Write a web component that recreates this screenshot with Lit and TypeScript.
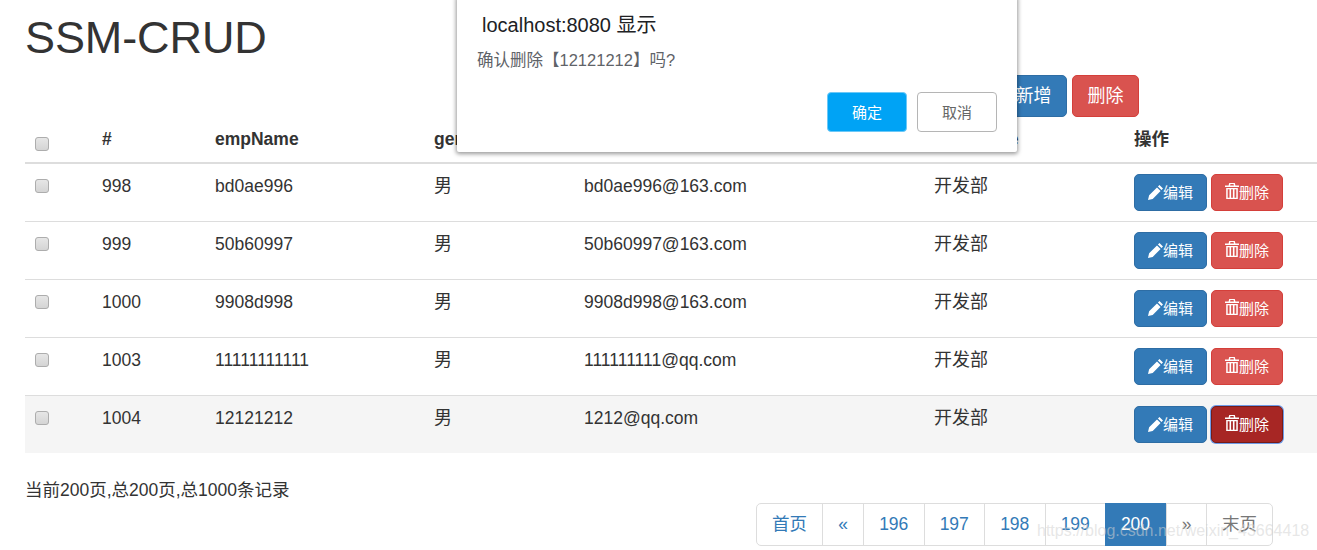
import { LitElement, html, css } from "lit";
import { customElement } from "lit/decorators.js";

const rows = [
  ["998", "bd0ae996", "bd0ae996@163.com"],
  ["999", "50b60997", "50b60997@163.com"],
  ["1000", "9908d998", "9908d998@163.com"],
  ["1003", "11111111111", "111111111@qq.com"],
  ["1004", "12121212", "1212@qq.com"],
];
const pages = ["首页", "«", "196", "197", "198", "199", "200", "»", "末页"];

const pencil = html`<svg class="ico" viewBox="0 0 16 16" aria-hidden="true"><path fill="currentColor" d="M0 16l1.2-5 8.4-8.4 3.8 3.8-8.4 8.4zM10.6 1.6L12.2 0 16 3.8l-1.6 1.6z"/></svg>`;
const trash = html`<svg class="ico trash" viewBox="0 0 14 16" preserveAspectRatio="none" aria-hidden="true"><path fill="currentColor" fill-rule="evenodd" d="M4.2 0h5.6l0.6 2.4H14v1.6H0V2.4h3.6zM5.4 1.1L5.1 2.4h3.8l-0.3-1.3zM1.2 5h11.6v11H1.2zM2.7 6.2v8.6h1.8V6.2zM6.1 6.2v8.6h1.8V6.2zM9.5 6.2v8.6h1.8V6.2z"/></svg>`;

@customElement("app-root")
export class AppRoot extends LitElement {
  static styles = css`
    :host {
      display: block;
      position: relative;
      height: 550px;
      overflow: hidden;
      background: #fff;
      color: #333;
      font-family: "Liberation Sans", "Noto Sans CJK SC", sans-serif;
      font-size: 17.5px;
      line-height: 25px;
    }
    .page { padding-left: 25px; }
    h1 {
      margin: 0;
      padding-top: 13px;
      font-size: 45px;
      font-weight: 400;
      line-height: 50px;
      letter-spacing: -0.1px;
    }
    .toolbar {
      display: flex;
      justify-content: flex-end;
      gap: 5px;
      margin-top: 12px;
      padding-right: 178px;
    }
    .btn {
      box-sizing: border-box;
      display: inline-flex;
      align-items: center;
      justify-content: center;
      border: 1px solid;
      border-radius: 5px;
      color: #fff;
      font: inherit;
      padding: 0;
    }
    .big { width: 67px; height: 42px; font-size: 18px; }
    .primary { background: #337ab7; border-color: #2e6da4; }
    .danger { background: #d9534f; border-color: #d43f3a; }
    table {
      width: 1292px;
      table-layout: fixed;
      border-collapse: collapse;
    }
    .c0 { width: 67px; }
    .c1 { width: 113px; }
    .c2 { width: 219px; }
    .c3 { width: 150px; }
    .c4 { width: 350px; }
    .c5 { width: 200px; }
    .c6 { width: 193px; }
    th, td {
      padding: 10px;
      text-align: left;
      vertical-align: top;
    }
    th {
      font-weight: 700;
      border-bottom: 2px solid #ddd;
      height: 25px;
    }
    td { border-bottom: 1px solid #ddd; height: 37px; }
    td.cjk { font-size: 18px; }
    tr:last-child td { border-bottom: 0; }
    tr.hover td { background: #f5f5f5; }
    .cb {
      appearance: none;
      display: block;
      box-sizing: border-box;
      width: 14px;
      height: 14px;
      margin: 0;
      border: 1px solid #adadad;
      border-radius: 3px;
      background: linear-gradient(#e6e6e6, #d4d4d4);
    }
    th .cb { margin-top: 10px; }
    td .cb { margin-top: 5px; }
    .ops { display: flex; gap: 4px; }
    .sm {
      width: 73px;
      height: 37px;
      font-size: 15px;
      line-height: 20px;
    }
    .sm.danger { width: 72px; }
    .sm.focus {
      background: #a72624;
      border-color: #761c19;
      box-shadow: 0 0 0 1px #6f9be8;
    }
    .ico { width: 15px; height: 15px; flex: none; margin-top: -1px; }
    .ico.trash { width: 14px; height: 16px; margin-top: -4px; }
    .status { margin-top: 25px; }
    .pager {
      display: flex;
      justify-content: flex-end;
      padding-right: 44px;
    }
    .pg {
      display: flex;
      box-sizing: border-box;
      height: 43px;
      border: 1px solid #ddd;
      border-radius: 5px;
    }
    .pg span {
      box-sizing: border-box;
      display: flex;
      align-items: center;
      justify-content: center;
      width: 60.5px;
      color: #337ab7;
      border-left: 1px solid #ddd;
    }
    .pg span:first-child { width: 65px; border-left: 0; }
    .pg span:nth-child(2) { width: 41px; }
    .pg span:nth-child(8) { width: 40px; color: #777; }
    .pg span:last-child { width: 66px; color: #777; }
    .pg span.on {
      width: 61px;
      background: #337ab7;
      color: #fff;
      border-left: 0;
      margin: -1px 0;
    }
    .dialog {
      position: absolute;
      left: 457px;
      top: -4px;
      box-sizing: border-box;
      width: 560px;
      height: 156px;
      background: #fff;
      border-radius: 2px;
      box-shadow: 0 1px 4px 1px rgba(0, 0, 0, 0.4);
    }
    .d-title {
      position: absolute;
      left: 25px;
      top: 17px;
      color: #202124;
      font-size: 20px;
    }
    .d-msg {
      position: absolute;
      left: 20px;
      top: 52px;
      color: #5f6368;
      font-size: 16.5px;
    }
    .d-actions {
      position: absolute;
      right: 20px;
      top: 96px;
      display: flex;
      gap: 10px;
    }
    .d-btn {
      box-sizing: border-box;
      width: 80px;
      height: 40px;
      border-radius: 4px;
      font: inherit;
      font-size: 15px;
      padding: 0;
    }
    .ok { background: #00a3f5; border: 1px solid #6cc8f7; color: #fff; }
    .cancel { background: #fff; border: 1px solid #b5b5b5; color: #666; }
    .mark {
      position: absolute;
      left: 1037px;
      top: 518px;
      color: rgba(210, 210, 210, 0.55);
      font-size: 16px;
      white-space: nowrap;
    }
  `;

  render() {
    return html`
      <div class="page">
        <h1>SSM-CRUD</h1>
        <div class="toolbar">
          <button class="btn big primary">新增</button>
          <button class="btn big danger">删除</button>
        </div>
        <table>
          <colgroup>
            ${[0, 1, 2, 3, 4, 5, 6].map((i) => html`<col class="c${i}" />`)}
          </colgroup>
          <thead>
            <tr>
              <th><input class="cb" type="checkbox" /></th>
              <th>#</th>
              <th>empName</th>
              <th>gender</th>
              <th>email</th>
              <th>deptName</th>
              <th>操作</th>
            </tr>
          </thead>
          <tbody>
            ${rows.map(
              (r, i) => html`<tr class=${i === 4 ? "hover" : ""}>
                <td><input class="cb" type="checkbox" /></td>
                <td>${r[0]}</td>
                <td>${r[1]}</td>
                <td class="cjk">男</td>
                <td>${r[2]}</td>
                <td class="cjk">开发部</td>
                <td>
                  <div class="ops">
                    <button class="btn sm primary">${pencil}编辑</button>
                    <button class="btn sm danger ${i === 4 ? "focus" : ""}">${trash}删除</button>
                  </div>
                </td>
              </tr>`
            )}
          </tbody>
        </table>
        <div class="status">当前200页,总200页,总1000条记录</div>
        <div class="pager">
          <div class="pg">
            ${pages.map((p) => html`<span class=${p === "200" ? "on" : ""}>${p}</span>`)}
          </div>
        </div>
      </div>
      <div class="dialog">
        <div class="d-title">localhost:8080 显示</div>
        <div class="d-msg">确认删除【12121212】吗?</div>
        <div class="d-actions">
          <button class="d-btn ok">确定</button>
          <button class="d-btn cancel">取消</button>
        </div>
      </div>
      <div class="mark">https://blog.csdn.net/weixin_43664418</div>
    `;
  }
}
